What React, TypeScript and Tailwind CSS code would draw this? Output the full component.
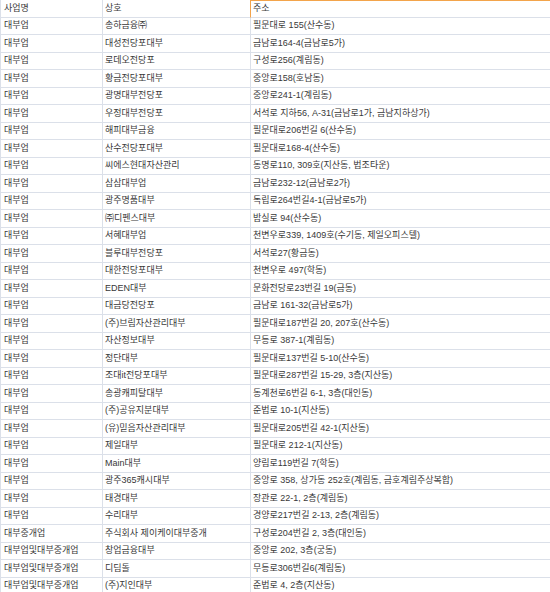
import React from "react";

const rows: [string, string, string][] = [
  ["대부업", "송하금융㈜", "필문대로 155(산수동)"],
  ["대부업", "대성전당포대부", "금남로164-4(금남로5가)"],
  ["대부업", "로데오전당포", "구성로256(계림동)"],
  ["대부업", "황금전당포대부", "중앙로158(호남동)"],
  ["대부업", "광명대부전당포", "중앙로241-1(계림동)"],
  ["대부업", "우정대부전당포", "서석로 지하56, A-31(금남로1가, 금남지하상가)"],
  ["대부업", "해피대부금융", "필문대로206번길 6(산수동)"],
  ["대부업", "산수전당포대부", "필문대로168-4(산수동)"],
  ["대부업", "씨에스현대자산관리", "동명로110, 309호(지산동, 법조타운)"],
  ["대부업", "삼삼대부업", "금남로232-12(금남로2가)"],
  ["대부업", "광주명품대부", "독립로264번길4-1(금남로5가)"],
  ["대부업", "㈜디펜스대부", "밤실로 94(산수동)"],
  ["대부업", "서혜대부업", "천변우로339, 1409호(수기동, 제일오피스텔)"],
  ["대부업", "블루대부전당포", "서석로27(황금동)"],
  ["대부업", "대한전당포대부", "천변우로 497(학동)"],
  ["대부업", "EDEN대부", "문화전당로23번길 19(금동)"],
  ["대부업", "대금당전당포", "금남로 161-32(금남로5가)"],
  ["대부업", "(주)브림자산관리대부", "필문대로187번길 20, 207호(산수동)"],
  ["대부업", "자산정보대부", "무등로 387-1(계림동)"],
  ["대부업", "정단대부", "필문대로137번길 5-10(산수동)"],
  ["대부업", "조대it전당포대부", "필문대로287번길 15-29, 3층(지산동)"],
  ["대부업", "송광캐피탈대부", "동계천로6번길 6-1, 3층(대인동)"],
  ["대부업", "(주)공유지분대부", "준법로 10-1(지산동)"],
  ["대부업", "(유)믿음자산관리대부", "필문대로205번길 42-1(지산동)"],
  ["대부업", "제일대부", "필문대로 212-1(지산동)"],
  ["대부업", "Main대부", "양림로119번길 7(학동)"],
  ["대부업", "광주365캐시대부", "중앙로 358, 상가동 252호(계림동, 금호계림주상복합)"],
  ["대부업", "태경대부", "장관로 22-1, 2층(계림동)"],
  ["대부업", "수리대부", "경양로217번길 2-13, 2층(계림동)"],
  ["대부중개업", "주식회사 제이케이대부중개", "구성로204번길 2, 3층(대인동)"],
  ["대부업및대부중개업", "창업금융대부", "중앙로 202, 3층(궁동)"],
  ["대부업및대부중개업", "디딤돌", "무등로306번길6(계림동)"],
  ["대부업및대부중개업", "(주)지인대부", "준법로 4, 2층(지산동)"],
];

export default function App() {
  return (
    <div
      className="w-[550px] h-[592px] overflow-hidden bg-white text-[9px] text-[#383838]"
      style={{ fontFamily: '"Liberation Sans", "Noto Sans CJK KR", sans-serif' }}
    >
      <div className="grid grid-cols-[102px_148px_300px] border-l border-[#dbe0e9]">
        <div className="h-[17.5px] flex items-center pl-[3px] border-r border-b border-[#dbe0e9] whitespace-nowrap">
          사업명
        </div>
        <div className="h-[17.5px] flex items-center pl-[2px] border-r border-b border-[#dbe0e9] whitespace-nowrap">
          상호
        </div>
        <div className="h-[17.5px] flex items-center pl-[2px] border-t border-l border-[#f3a44b] border-b-[#dbe0e9] border-b whitespace-nowrap -ml-px">
          주소
        </div>
        {rows.map((r, i) => (
          <React.Fragment key={i}>
            <div className="h-[17.5px] flex items-center pl-[3px] border-r border-b border-[#dbe0e9] whitespace-nowrap overflow-hidden">
              {r[0]}
            </div>
            <div className="h-[17.5px] flex items-center pl-[2px] border-r border-b border-[#dbe0e9] whitespace-nowrap overflow-hidden">
              {r[1]}
            </div>
            <div className="h-[17.5px] flex items-center pl-[2px] border-b border-[#dbe0e9] whitespace-nowrap overflow-hidden">
              {r[2]}
            </div>
          </React.Fragment>
        ))}
      </div>
    </div>
  );
}
